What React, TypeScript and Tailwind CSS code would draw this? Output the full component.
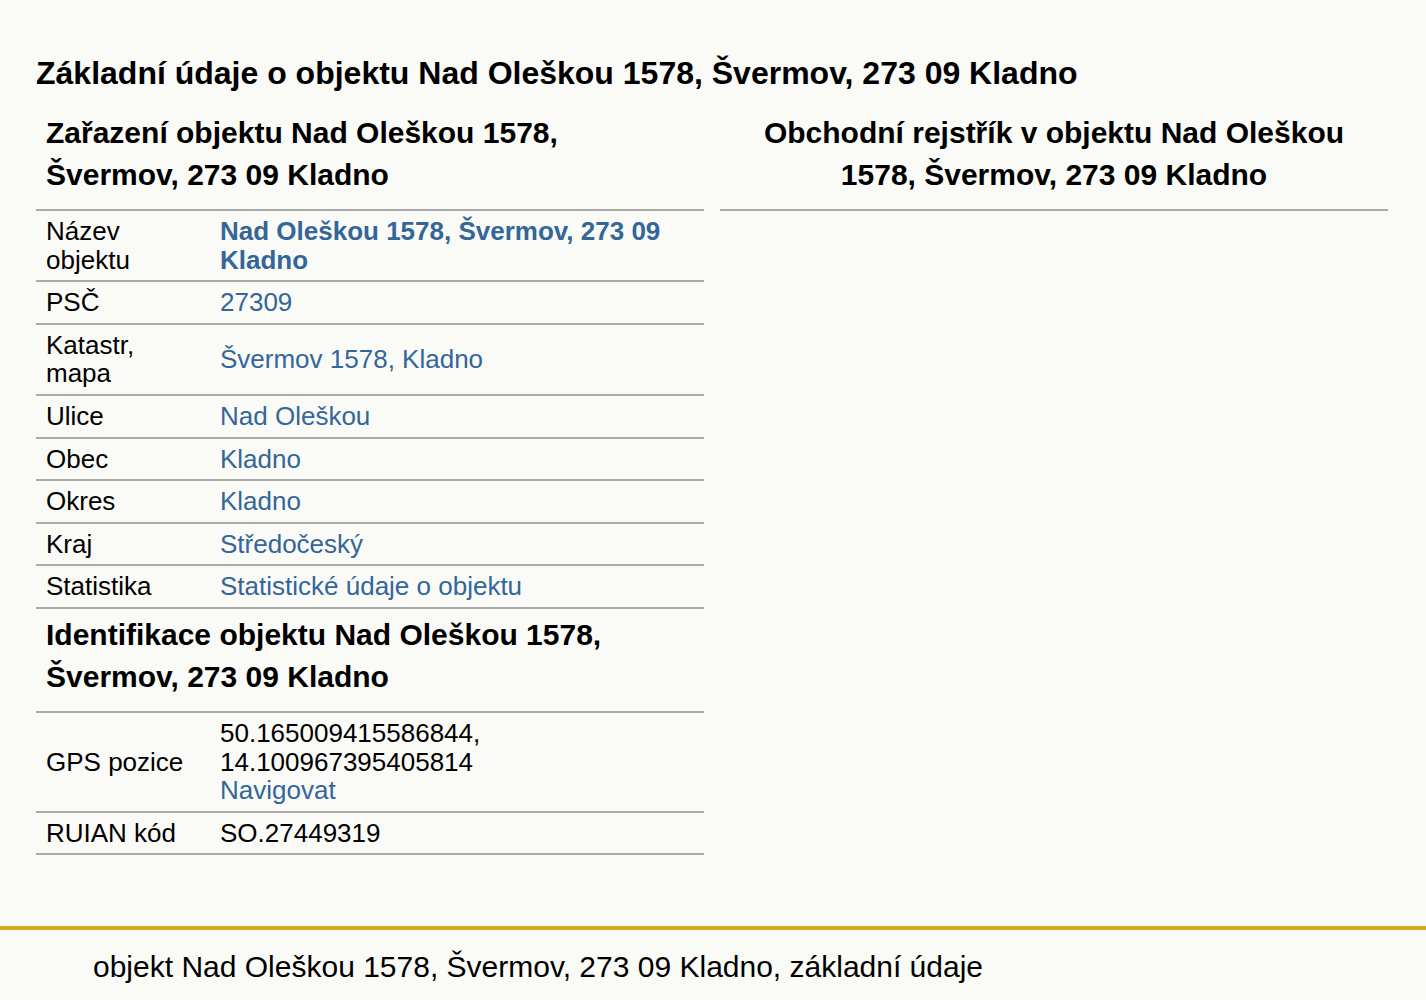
import React from "react";

const link = "text-[#336699]";

function Row({
  label,
  children,
}: {
  label: React.ReactNode;
  children: React.ReactNode;
}) {
  return (
    <div className="flex items-center border-b-2 border-[#aaaaaa] py-[6px]">
      <div className="w-[184px] shrink-0 pl-[10px] pr-[10px]">{label}</div>
      <div className="flex-1 pr-[10px]">{children}</div>
    </div>
  );
}

function Heading({ children, center }: { children: React.ReactNode; center?: boolean }) {
  return (
    <h2
      className={`border-b-2 border-[#aaaaaa] px-[10px] pt-[5px] pb-[13px] text-[30px] font-bold leading-[42px] ${
        center ? "text-center" : ""
      }`}
    >
      {children}
    </h2>
  );
}

export default function App() {
  return (
    <div className="min-h-screen bg-[#fafaf7] font-['Liberation_Sans',Arial,sans-serif] text-black">
      <div className="px-[36px] pt-[55px]">
        <h1 className="text-[32px] font-bold leading-[36px]">
          Základní údaje o objektu Nad Oleškou 1578, Švermov, 273 09 Kladno
        </h1>
        <div className="mt-[16px] flex gap-[16px] pr-[2px]">
          <div className="w-[668px] text-[26px] leading-[28.6px]">
            <Heading>
              Zařazení objektu Nad Oleškou 1578,
              <br />
              Švermov, 273 09 Kladno
            </Heading>
            <Row label={<>Název<br />objektu</>}>
              <a className={`${link} font-bold`}>
                Nad Oleškou 1578, Švermov, 273 09 Kladno
              </a>
            </Row>
            <Row label="PSČ">
              <a className={link}>27309</a>
            </Row>
            <Row label={<>Katastr,<br />mapa</>}>
              <a className={link}>Švermov 1578, Kladno</a>
            </Row>
            <Row label="Ulice">
              <a className={link}>Nad Oleškou</a>
            </Row>
            <Row label="Obec">
              <a className={link}>Kladno</a>
            </Row>
            <Row label="Okres">
              <a className={link}>Kladno</a>
            </Row>
            <Row label="Kraj">
              <a className={link}>Středočeský</a>
            </Row>
            <Row label="Statistika">
              <a className={link}>Statistické údaje o objektu</a>
            </Row>
            <Heading>
              Identifikace objektu Nad Oleškou 1578,
              <br />
              Švermov, 273 09 Kladno
            </Heading>
            <Row label="GPS pozice">
              50.165009415586844,
              <br />
              14.100967395405814
              <br />
              <a className={link}>Navigovat</a>
            </Row>
            <Row label="RUIAN kód">SO.27449319</Row>
          </div>
          <div className="w-[668px]">
            <Heading center>
              Obchodní rejstřík v objektu Nad Oleškou
              <br />
              1578, Švermov, 273 09 Kladno
            </Heading>
          </div>
        </div>
      </div>
      <footer className="mt-[71px] border-t-4 border-[#daa520]">
        <p className="px-[93px] pt-[19px] pb-[20px] text-[30px] leading-[36px]">
          objekt Nad Oleškou 1578, Švermov, 273 09 Kladno, základní údaje
        </p>
      </footer>
    </div>
  );
}
